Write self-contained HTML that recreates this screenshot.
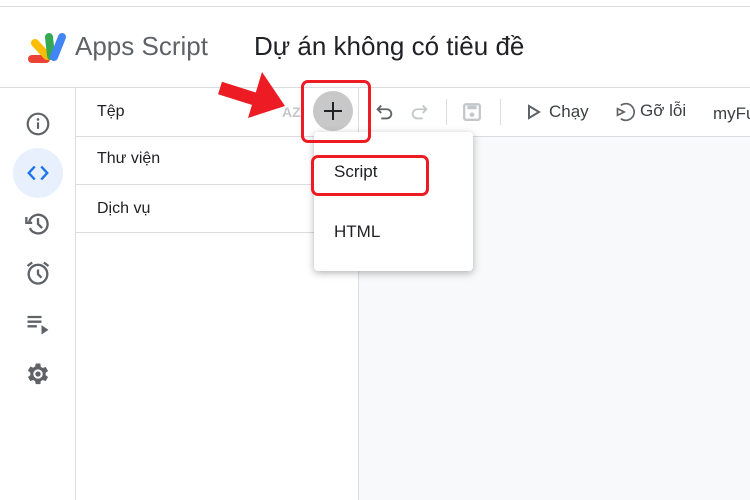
<!DOCTYPE html>
<html><head><meta charset="utf-8"><style>
*{margin:0;padding:0;box-sizing:border-box}
body{width:750px;height:500px;overflow:hidden;background:#fff;font-family:"Liberation Sans","Noto Sans CJK SC",sans-serif;position:relative;color:#202124}
.a{position:absolute}
</style></head><body>
<div class="a" style="left:0;top:6px;width:750px;height:1px;background:#dadce0"></div>
<svg class="a" style="left:26px;top:29px" width="42" height="35" viewBox="0 0 42 35">
<g stroke-linecap="round" fill="none">
<line x1="6" y1="30" x2="20" y2="30" stroke="#ea4335" stroke-width="8"/>
<line x1="9" y1="14" x2="21" y2="27" stroke="#fbbc04" stroke-width="8"/>
<line x1="23" y1="8" x2="25" y2="27" stroke="#34a853" stroke-width="8"/>
<line x1="36" y1="8" x2="28" y2="28" stroke="#4285f4" stroke-width="8"/>
</g></svg>
<div class="a" style="left:75px;top:31px;font-size:26px;color:#5f6368">Apps Script</div>
<div class="a" style="left:254px;top:31px;font-size:26px;color:#202124">Dự án không có tiêu đề</div>
<div class="a" style="left:0;top:87px;width:750px;height:1px;background:#dadce0"></div>
<div class="a" style="left:75px;top:88px;width:1px;height:412px;background:#dadce0"></div>
<div class="a" style="left:358px;top:88px;width:1px;height:412px;background:#dadce0"></div>
<div class="a" style="left:359px;top:136px;width:391px;height:364px;background:#f8f9fa;border-top:1px solid #dadce0"></div>
<svg class="a" style="left:25px;top:111px" width="26" height="26" viewBox="0 0 24 24"><circle cx="12" cy="12" r="9.5" fill="none" stroke="#5f6368" stroke-width="2"/><rect x="11" y="10.5" width="2" height="6" fill="#5f6368"/><circle cx="12" cy="7.8" r="1.2" fill="#5f6368"/></svg>
<div class="a" style="left:13px;top:148px;width:50px;height:50px;border-radius:50%;background:#e8f0fe"></div>
<svg class="a" style="left:25px;top:160px" width="26" height="26" viewBox="0 0 24 24"><path d="M9 6L3.5 12L9 18M15 6L20.5 12L15 18" fill="none" stroke="#1a73e8" stroke-width="2.2"/></svg>
<svg class="a" style="left:24px;top:210px" width="28" height="28" viewBox="0 0 24 24"><path d="M4.5 10A8 8 0 1 1 5 15.5" fill="none" stroke="#5f6368" stroke-width="2"/><path d="M2 6v5h5" fill="none" stroke="#5f6368" stroke-width="2"/><path d="M12 7v5l3.5 3.5" fill="none" stroke="#5f6368" stroke-width="2"/></svg>
<svg class="a" style="left:24px;top:259px" width="28" height="28" viewBox="0 0 24 24"><circle cx="12" cy="13" r="8" fill="none" stroke="#5f6368" stroke-width="2"/><path d="M12 9v4l3 3M3 6l4-3M21 6l-4-3" fill="none" stroke="#5f6368" stroke-width="2"/></svg>
<svg class="a" style="left:24px;top:310px" width="28" height="28" viewBox="0 0 24 24"><path d="M3 6h12M3 10h12M3 14h8" stroke="#5f6368" stroke-width="2"/><path d="M15 13l6 4-6 4z" fill="#5f6368"/></svg>
<svg class="a" style="left:24px;top:360px" width="28" height="28" viewBox="0 0 24 24"><path fill="#5f6368" d="M19.4 13a7.5 7.5 0 0 0 0-2l2.1-1.6-2-3.5-2.5 1a7 7 0 0 0-1.7-1L14.9 3h-4l-.4 2.6a7 7 0 0 0-1.7 1l-2.5-1-2 3.5L6.4 11a7.5 7.5 0 0 0 0 2l-2.1 1.6 2 3.5 2.5-1a7 7 0 0 0 1.7 1l.4 2.6h4l.4-2.6a7 7 0 0 0 1.7-1l2.5 1 2-3.5zM12.9 16a4 4 0 1 1 0-8 4 4 0 0 1 0 8z" transform="translate(-0.9 0)"/><circle cx="12" cy="12" r="2.3" fill="#5f6368"/></svg>
<div class="a" style="left:97px;top:103px;font-size:16px">Tệp</div>
<div class="a" style="left:76px;top:136px;width:282px;height:1px;background:#dadce0"></div>
<div class="a" style="left:97px;top:150px;font-size:16px">Thư viện</div>
<div class="a" style="left:76px;top:184px;width:282px;height:1px;background:#dadce0"></div>
<div class="a" style="left:97px;top:200px;font-size:16px">Dịch vụ</div>
<div class="a" style="left:76px;top:232px;width:282px;height:1px;background:#dadce0"></div>
<div class="a" style="left:282px;top:104px;font-size:14px;font-weight:bold;color:#c4c7c9">AZ</div>
<div class="a" style="left:313px;top:91px;width:40px;height:40px;border-radius:50%;background:#c8c8c8"></div>
<svg class="a" style="left:321px;top:99px" width="24" height="24" viewBox="0 0 24 24"><path d="M12 3v18M3 12h18" stroke="#202124" stroke-width="2"/></svg>
<svg class="a" style="left:373px;top:101px" width="22" height="22" viewBox="0 0 24 24"><path d="M6 9h9a5 5 0 0 1 0 10H9M9 5L5 9l4 4" fill="none" stroke="#5f6368" stroke-width="2"/></svg>
<svg class="a" style="left:409px;top:101px" width="22" height="22" viewBox="0 0 24 24"><path d="M18 9H9a5 5 0 0 0 0 10h6M15 5l4 4-4 4" fill="none" stroke="#c4c7c9" stroke-width="2"/></svg>
<div class="a" style="left:446px;top:99px;width:1px;height:26px;background:#dadce0"></div>
<svg class="a" style="left:461px;top:101px" width="22" height="22" viewBox="0 0 24 24"><rect x="3.5" y="3.5" width="17" height="17" rx="2" fill="none" stroke="#c4c7c9" stroke-width="2.5"/><rect x="7" y="5" width="10" height="4" fill="#c4c7c9"/><circle cx="12" cy="15" r="2.5" fill="#c4c7c9"/></svg>
<div class="a" style="left:500px;top:99px;width:1px;height:26px;background:#dadce0"></div>
<svg class="a" style="left:527px;top:104px" width="14" height="16" viewBox="0 0 14 16"><path d="M2 2l10 6-10 6z" fill="none" stroke="#5f6368" stroke-width="2"/></svg>
<div class="a" style="left:549px;top:102px;font-size:17px;color:#3c4043">Chạy</div>
<svg class="a" style="left:615px;top:102px" width="20" height="20" viewBox="0 0 24 24"><path d="M7 4a10 10 0 1 1 0 16" fill="none" stroke="#5f6368" stroke-width="2"/><path d="M3 8l8 4-8 4z" fill="none" stroke="#5f6368" stroke-width="2"/></svg>
<div class="a" style="left:640px;top:101px;font-size:17px;color:#3c4043">Gỡ lỗi</div>
<div class="a" style="left:713px;top:104px;font-size:17px;color:#3c4043">myFu</div>
<div class="a" style="left:314px;top:132px;width:159px;height:139px;background:#fff;border-radius:4px;box-shadow:0 2px 8px rgba(0,0,0,.3)"></div>
<div class="a" style="left:334px;top:162px;font-size:17px">Script</div>
<div class="a" style="left:334px;top:222px;font-size:17px">HTML</div>
<div class="a" style="left:301px;top:80px;width:70px;height:63px;border:3px solid #ed1c24;border-radius:7px"></div>
<div class="a" style="left:311px;top:155px;width:118px;height:41px;border:3px solid #ed1c24;border-radius:7px"></div>
<svg class="a" style="left:0;top:0" width="750" height="500" viewBox="0 0 750 500"><path d="M220 88L258 100" stroke="#ed1c24" stroke-width="13"/><path d="M262 72L285 106 248 118z" fill="#ed1c24"/></svg>
</body></html>
